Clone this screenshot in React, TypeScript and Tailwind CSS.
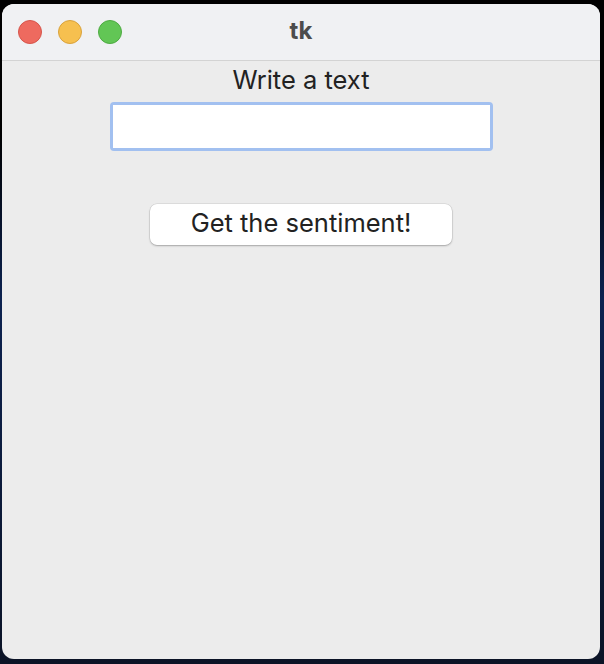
import React from 'react';

const TrafficLights: React.FC = () => (
  <div className="flex items-center gap-4 pl-4">
    <span className="w-6 h-6 rounded-full bg-[#ee6a5f] border border-[#d6554b]" />
    <span className="w-6 h-6 rounded-full bg-[#f6c04f] border border-[#d9a23c]" />
    <span className="w-6 h-6 rounded-full bg-[#62c655] border border-[#4eab42]" />
  </div>
);

const App: React.FC = () => {
  return (
    <div
      className="w-[604px] h-[664px] pl-[2px] pt-[4px] bg-[linear-gradient(180deg,#000000_0%,#000000_20%,#0c2250_45%,#0b1326_100%)]"
      style={{ fontFamily: 'Inter, "Noto Sans", sans-serif' }}
    >
      <div className="w-[598px] h-[655px] rounded-[12px] overflow-hidden bg-[#ececec] flex flex-col">
        {/* title bar */}
        <div className="h-[57px] shrink-0 grid grid-cols-[1fr_auto_1fr] items-center bg-[#f0f1f3] border-b border-[#d3d3d3]">
          <TrafficLights />
          <div className="text-[24px] font-bold text-[#4c4c4c] leading-none -mt-[2px]">tk</div>
          <div />
        </div>

        {/* content */}
        <div className="flex flex-col items-center pt-[4px]">
          <div className="text-[25.5px] leading-[30px] text-[#222222]">Write a text</div>
          <div className="mt-[7px] w-[383px] h-[49px] p-[3px] rounded-[4px] bg-[#a2c0f0]">
            <div className="w-full h-full bg-white" />
          </div>
          <button className="mt-[53px] w-[302px] h-[41px] pb-[4px] rounded-[7px] bg-white text-[25.5px] text-[#222222] leading-none shadow-[0_0_0_0.5px_rgba(0,0,0,0.12),0_1px_2px_rgba(0,0,0,0.25)]">
            Get the sentiment!
          </button>
        </div>
      </div>
    </div>
  );
};

export default App;
